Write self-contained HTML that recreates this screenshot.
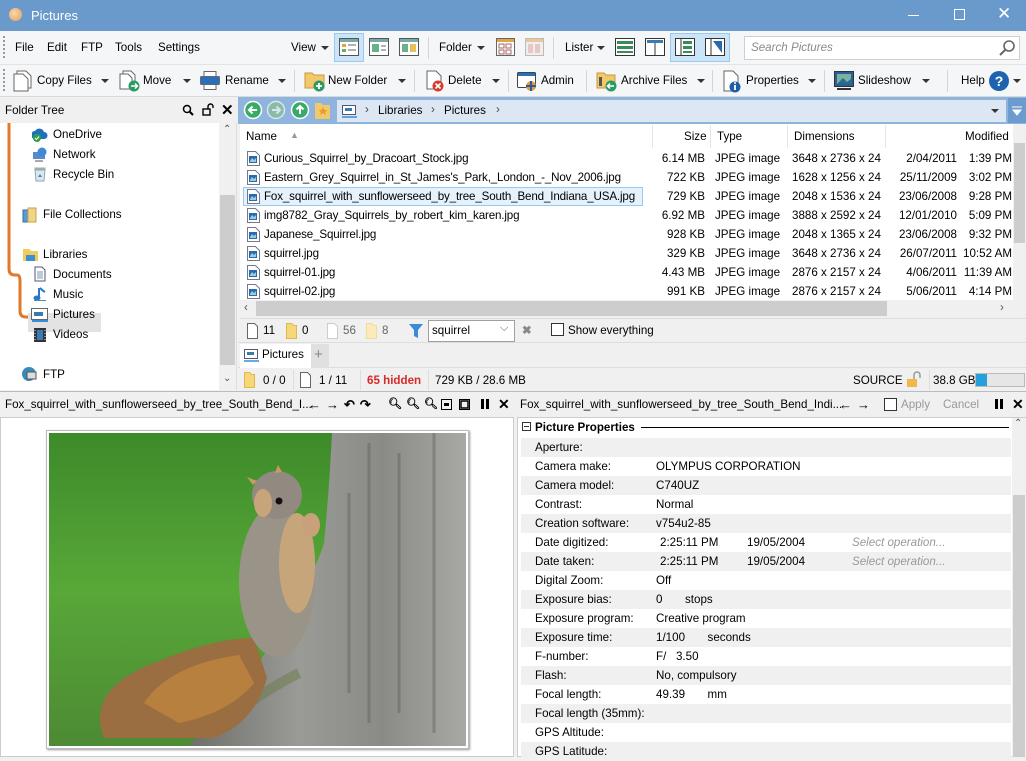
<!DOCTYPE html>
<html><head><meta charset="utf-8"><style>
*{box-sizing:border-box;margin:0;padding:0}
body{width:1026px;height:757px;overflow:hidden;background:#f0f0f0;font-family:"Liberation Sans",sans-serif;font-size:11.6px;color:#000;position:relative}
.a{position:absolute;white-space:nowrap}
.ic{position:absolute;display:block}
.dd{position:absolute;width:0;height:0;border-left:4px solid transparent;border-right:4px solid transparent;border-top:4px solid #333}
.sep{position:absolute;width:1px;background:#d5d5d5}
.prow{position:absolute;left:521px;width:490px;height:19px}
</style></head><body>
<div class="a" style="left:0;top:0;width:1026px;height:31px;background:#699acb"></div>
<div class="a" style="left:9px;top:8px;width:13px;height:13px;border-radius:50%;background:radial-gradient(circle at 40% 40%,#f7d9a8,#e49a5e)"></div>
<div class="a" style="left:31px;top:8px;color:#fff;font-size:13px">Pictures</div>
<div class="a" style="left:908px;top:15px;width:11px;height:1px;background:#fff"></div>
<div class="a" style="left:954px;top:9px;width:11px;height:11px;border:1px solid #fff"></div>
<div class="a" style="left:997px;top:4px;color:#fff;font-size:17px">✕</div>
<div class="a" style="left:0;top:31px;width:1026px;height:66px;background:#f5f6f7;border-bottom:1px solid #d9d9d9"></div>
<div class="a" style="left:0;top:64px;width:1026px;height:1px;background:#e3e3e3"></div>
<div class="a" style="left:3px;top:36px;width:2px;height:22px;border-left:2px dotted #999"></div>
<div class="a" style="left:3px;top:69px;width:2px;height:22px;border-left:2px dotted #999"></div>
<div class="a" style="left:15px;top:41px">File</div>
<div class="a" style="left:47px;top:41px">Edit</div>
<div class="a" style="left:81px;top:41px">FTP</div>
<div class="a" style="left:115px;top:41px">Tools</div>
<div class="a" style="left:158px;top:41px">Settings</div>
<div class="a" style="left:291px;top:41px">View</div><div class="dd" style="left:321px;top:46px"></div>
<div class="a" style="left:334px;top:33px;width:30px;height:29px;background:#cce4f7;border:1px solid #99c9ef"></div>
<svg class="ic" style="left:339px;top:38px" width="20" height="18"><rect x=".5" y=".5" width="19" height="17" fill="#fff" stroke="#555"/><rect x="1" y="1" width="18" height="3" fill="#7aa"/><rect x="3" y="6" width="4" height="3" fill="#d9a83a"/><rect x="3" y="11" width="4" height="3" fill="#6aaa6a"/><path d="M9 7h8M9 12h8" stroke="#666"/></svg>
<svg class="ic" style="left:369px;top:38px" width="20" height="18"><rect x=".5" y=".5" width="19" height="17" fill="#fff" stroke="#555"/><rect x="1" y="1" width="18" height="3" fill="#7aa"/><rect x="3" y="6" width="7" height="8" fill="#6ab08a"/><path d="M12 8h5M12 12h5" stroke="#666"/></svg>
<svg class="ic" style="left:399px;top:38px" width="20" height="18"><rect x=".5" y=".5" width="19" height="17" fill="#fff" stroke="#555"/><rect x="1" y="1" width="18" height="3" fill="#7aa"/><rect x="3" y="6" width="6" height="8" fill="#6ab08a"/><rect x="11" y="6" width="6" height="8" fill="#e2c35a"/></svg>
<div class="sep" style="left:428px;top:37px;height:22px"></div>
<div class="a" style="left:439px;top:41px">Folder</div><div class="dd" style="left:477px;top:46px"></div>
<svg class="ic" style="left:496px;top:38px" width="19" height="18"><rect x=".5" y=".5" width="18" height="17" fill="#fff" stroke="#666"/><rect x="1" y="1" width="17" height="3" fill="#e2a34a"/><rect x="3" y="6" width="5" height="4" fill="none" stroke="#a66"/><rect x="10" y="6" width="5" height="4" fill="none" stroke="#a66"/><rect x="3" y="12" width="5" height="4" fill="none" stroke="#a66"/><rect x="10" y="12" width="5" height="4" fill="none" stroke="#a66"/></svg>
<svg class="ic" style="left:525px;top:38px" width="19" height="18"><rect x=".5" y=".5" width="18" height="17" fill="#eee" stroke="#bbb"/><rect x="1" y="1" width="17" height="3" fill="#ebc89a"/><rect x="3" y="6" width="5" height="9" fill="#e9c6c6"/><rect x="10" y="6" width="5" height="9" fill="#e9c6c6"/></svg>
<div class="sep" style="left:553px;top:37px;height:22px"></div>
<div class="a" style="left:565px;top:41px">Lister</div><div class="dd" style="left:597px;top:46px"></div>
<svg class="ic" style="left:615px;top:38px" width="20" height="18"><rect x=".5" y=".5" width="19" height="17" fill="#fff" stroke="#333"/><rect x="2" y="3" width="16" height="3" fill="#3b8a5a"/><rect x="2" y="8" width="16" height="3" fill="#3b8a5a"/><rect x="2" y="13" width="16" height="2" fill="#3b8a5a"/></svg>
<svg class="ic" style="left:645px;top:38px" width="20" height="18"><rect x=".5" y=".5" width="19" height="17" fill="#fff" stroke="#333"/><rect x="2" y="2" width="16" height="3" fill="#3a7ab0"/><path d="M10 5v12" stroke="#333"/></svg>
<div class="a" style="left:670px;top:33px;width:60px;height:29px;background:#cce4f7;border:1px solid #99c9ef"></div>
<svg class="ic" style="left:675px;top:38px" width="20" height="18"><rect x=".5" y=".5" width="19" height="17" fill="#fff" stroke="#333"/><path d="M6 1v16" stroke="#333"/><rect x="8" y="3" width="9" height="3" fill="#3b8a5a"/><rect x="8" y="8" width="9" height="3" fill="#3b8a5a"/><rect x="8" y="13" width="9" height="2" fill="#3b8a5a"/></svg>
<svg class="ic" style="left:705px;top:38px" width="20" height="18"><rect x=".5" y=".5" width="19" height="17" fill="#fff" stroke="#333"/><path d="M6 1v16" stroke="#333"/><path d="M8 3h9v12z" fill="#2a6aa8"/></svg>
<div class="a" style="left:744px;top:36px;width:276px;height:24px;background:#fff;border:1px solid #d0d0d0"></div>
<div class="a" style="left:751px;top:41px;color:#8a8a8a;font-style:italic">Search Pictures</div>
<svg class="ic" style="left:999px;top:39px" width="17" height="17"><circle cx="10" cy="7" r="5" fill="none" stroke="#666" stroke-width="1.6"/><path d="M6 11l-5 5" stroke="#666" stroke-width="2"/></svg>
<svg class="ic" style="left:13px;top:70px" width="20" height="22"><path d="M4 1h9l5 5v12H4z" fill="#fff" stroke="#666"/><path d="M1 4h9l5 5v12H1z" fill="#fff" stroke="#666"/></svg>
<div class="a" style="left:37px;top:74px">Copy Files</div><div class="dd" style="left:101px;top:79px"></div>
<svg class="ic" style="left:119px;top:70px" width="22" height="22"><path d="M4 1h8l4 4v11H4z" fill="#fff" stroke="#666"/><path d="M1 4h8l4 4v11H1z" fill="#fff" stroke="#666"/><circle cx="15" cy="16" r="5.5" fill="#2d9a63"/><path d="M12 16h6M16 13.5l2.5 2.5-2.5 2.5" stroke="#fff" fill="none" stroke-width="1.5"/></svg>
<div class="a" style="left:143px;top:74px">Move</div><div class="dd" style="left:183px;top:79px"></div>
<svg class="ic" style="left:200px;top:71px" width="20" height="19"><rect x="4" y=".5" width="12" height="5" fill="#fff" stroke="#666"/><rect x=".5" y="5.5" width="19" height="8" rx="1" fill="#2a70b8" stroke="#667"/><rect x="4" y="13.5" width="12" height="5" fill="#fff" stroke="#666"/></svg>
<div class="a" style="left:225px;top:74px">Rename</div><div class="dd" style="left:278px;top:79px"></div>
<div class="sep" style="left:294px;top:70px;height:22px"></div>
<svg class="ic" style="left:304px;top:70px" width="22" height="22"><path d="M1 3h7l2 2h10v13H1z" fill="#f1c86a" stroke="#c89a3a"/><circle cx="15" cy="16" r="5.5" fill="#2d9a63"/><path d="M12 16h6M15 13v6" stroke="#fff" stroke-width="1.8"/></svg>
<div class="a" style="left:328px;top:74px">New Folder</div><div class="dd" style="left:398px;top:79px"></div>
<div class="sep" style="left:414px;top:70px;height:22px"></div>
<svg class="ic" style="left:426px;top:70px" width="22" height="22"><path d="M1 1h9l5 5v13H1z" fill="#fff" stroke="#666"/><circle cx="12" cy="16" r="5.5" fill="#d73b2e"/><path d="M9.5 13.5l5 5M14.5 13.5l-5 5" stroke="#fff" stroke-width="1.6"/></svg>
<div class="a" style="left:448px;top:74px">Delete</div><div class="dd" style="left:492px;top:79px"></div>
<div class="sep" style="left:508px;top:70px;height:22px"></div>
<svg class="ic" style="left:517px;top:70px" width="22" height="22"><rect x=".5" y="2.5" width="18" height="15" rx="1" fill="#fff" stroke="#444"/><rect x="1" y="3" width="17" height="3" fill="#2a70b8"/><circle cx="14" cy="16" r="5" fill="#e29a3a"/><path d="M14 11v10M9 16h10" stroke="#2a5a9a" stroke-width="2"/></svg>
<div class="a" style="left:541px;top:74px">Admin</div>
<div class="sep" style="left:586px;top:70px;height:22px"></div>
<svg class="ic" style="left:596px;top:70px" width="22" height="22"><path d="M1 3h7l2 2h9v13H1z" fill="#f1c86a" stroke="#c89a3a"/><rect x="3" y="7" width="3" height="9" fill="#555"/><circle cx="15" cy="16" r="5.5" fill="#2d9a63"/><path d="M18 16h-6M14 13.5L11.5 16l2.5 2.5" stroke="#fff" fill="none" stroke-width="1.5"/></svg>
<div class="a" style="left:621px;top:74px">Archive Files</div><div class="dd" style="left:697px;top:79px"></div>
<div class="sep" style="left:712px;top:70px;height:22px"></div>
<svg class="ic" style="left:723px;top:70px" width="22" height="23"><path d="M1 1h9l5 5v15H1z" fill="#fff" stroke="#666"/><circle cx="12" cy="17" r="5.5" fill="#1f5fa8"/><path d="M12 15v5" stroke="#fff" stroke-width="1.8"/><circle cx="12" cy="13" r="1" fill="#fff"/></svg>
<div class="a" style="left:746px;top:74px">Properties</div><div class="dd" style="left:808px;top:79px"></div>
<div class="sep" style="left:824px;top:70px;height:22px"></div>
<svg class="ic" style="left:834px;top:71px" width="20" height="20"><rect x=".5" y=".5" width="19" height="15" fill="#2a5f9a" stroke="#333"/><rect x="3" y="3" width="14" height="10" fill="#7ab2a0"/><path d="M3 13l6-6 4 4 4-3v5z" fill="#2a6a8a"/><path d="M3 18h14" stroke="#333" stroke-width="2"/></svg>
<div class="a" style="left:858px;top:74px">Slideshow</div><div class="dd" style="left:922px;top:79px"></div>
<div class="sep" style="left:947px;top:70px;height:22px"></div>
<div class="a" style="left:961px;top:74px">Help</div>
<div class="a" style="left:989px;top:71px;width:20px;height:20px;border-radius:50%;background:#1f63b0;color:#fff;font-weight:bold;font-size:14px;text-align:center;line-height:20px">?</div>
<div class="dd" style="left:1013px;top:79px"></div>
<div class="a" style="left:0;top:98px;width:238px;height:25px;background:#f0f0f0"></div>
<div class="a" style="left:5px;top:104px">Folder Tree</div>
<svg class="ic" style="left:182px;top:104px" width="12" height="12"><circle cx="5" cy="5" r="3.5" fill="none" stroke="#000" stroke-width="1.5"/><path d="M7.5 7.5L11 11" stroke="#000" stroke-width="2"/></svg>
<svg class="ic" style="left:202px;top:103px" width="13" height="13"><rect x="1" y="6" width="7" height="6" fill="none" stroke="#000" stroke-width="1.4"/><path d="M6 6V3.5a2.5 2.5 0 015 0V5" fill="none" stroke="#000" stroke-width="1.4"/></svg>
<div class="a" style="left:221px;top:101px;font-size:15px;font-weight:bold">✕</div>
<div class="a" style="left:0;top:123px;width:237px;height:267px;background:#fff;border-right:1px solid #ddd"></div>
<div class="a" style="left:219px;top:123px;width:17px;height:267px;background:#f0f0f0"></div>
<div class="a" style="left:220px;top:195px;width:15px;height:170px;background:#cdcdcd"></div>
<div class="a" style="left:223px;top:124px;color:#555;font-size:10px">⌃</div>
<div class="a" style="left:223px;top:373px;color:#555;font-size:10px">⌄</div>
<svg class="ic" style="left:0;top:123px" width="40" height="200"><path d="M9 0v146q0 6 6 6h2q3 0 3 6v30q0 6 6 6h10" fill="none" stroke="#e07a2a" stroke-width="3"/></svg>
<div class="a" style="left:28px;top:313px;width:73px;height:19px;background:#e3e3e3"></div>
<svg class="ic" style="left:32px;top:128px" width="16" height="14"><path d="M3 11a4 4 0 010-8 5 5 0 019 1 3.5 3.5 0 010 7z" fill="#1f6fbf"/><circle cx="5" cy="10" r="4" fill="#30a040"/><path d="M3 10l1.5 1.5L7 8.5" stroke="#fff" fill="none"/></svg>
<div class="a" style="left:53px;top:128px">OneDrive</div>
<svg class="ic" style="left:32px;top:147px" width="16" height="15"><rect x="1" y="5" width="12" height="7" fill="#5a8ac8"/><circle cx="10" cy="5" r="4.5" fill="#3c8ad8"/><path d="M3 14h8" stroke="#555"/></svg>
<div class="a" style="left:53px;top:148px">Network</div>
<svg class="ic" style="left:34px;top:167px" width="12" height="15"><rect x="0.5" y="0.5" width="11" height="2" fill="#aaa"/><path d="M1 3h10l-1 11H2z" fill="#dde6ee" stroke="#8aa"/><path d="M4 10l2-3 2 3z" fill="#3a8ac8"/></svg>
<div class="a" style="left:53px;top:168px">Recycle Bin</div>
<svg class="ic" style="left:22px;top:207px" width="16" height="16"><rect x="1" y="3" width="7" height="12" fill="#5a9ad8" stroke="#3a6a9a"/><rect x="6" y="1" width="8" height="14" fill="#f1d487" stroke="#c8a24a"/></svg>
<div class="a" style="left:43px;top:208px">File Collections</div>
<svg class="ic" style="left:22px;top:247px" width="17" height="15"><path d="M1 2h6l2 2h7v10H1z" fill="#f3cb5a"/><rect x="4" y="8" width="9" height="6" fill="#3a90d8"/></svg>
<div class="a" style="left:43px;top:248px">Libraries</div>
<svg class="ic" style="left:33px;top:266px" width="14" height="16"><path d="M2 1h7l3 3v11H2z" fill="#fff" stroke="#557"/><path d="M4 6h6M4 8h6M4 10h6M4 12h6" stroke="#79a"/></svg>
<div class="a" style="left:53px;top:268px">Documents</div>
<svg class="ic" style="left:33px;top:286px" width="14" height="16"><path d="M6 2v10" stroke="#2a78c8" stroke-width="2"/><ellipse cx="4" cy="12" rx="3.5" ry="2.5" fill="#2a78c8"/><path d="M7 2q3 3 5 4" stroke="#2a78c8" stroke-width="2" fill="none"/><rect x="1" y="14" width="12" height="1" fill="#58a"/></svg>
<div class="a" style="left:53px;top:288px">Music</div>
<svg class="ic" style="left:31px;top:308px" width="18" height="14"><rect x=".5" y=".5" width="16" height="11" fill="#fff" stroke="#666"/><rect x="3" y="4" width="9" height="4" fill="#3a7ab0"/><path d="M1 13h16" stroke="#3a8ad8" stroke-width="2"/></svg>
<div class="a" style="left:53px;top:308px">Pictures</div>
<svg class="ic" style="left:33px;top:327px" width="14" height="16"><rect x="1" y="1" width="12" height="14" fill="#333"/><rect x="4" y="3" width="6" height="10" fill="#3a7ab8"/><path d="M2 3v1M2 6v1M2 9v1M2 12v1M12 3v1M12 6v1M12 9v1M12 12v1" stroke="#eee"/></svg>
<div class="a" style="left:53px;top:328px">Videos</div>
<svg class="ic" style="left:21px;top:366px" width="16" height="16"><circle cx="8" cy="8" r="7" fill="#3a8ab8"/><rect x="6" y="6" width="9" height="7" fill="#ddd" stroke="#555"/></svg>
<div class="a" style="left:43px;top:368px">FTP</div>
<div class="a" style="left:238px;top:97px;width:788px;height:27px;background:#8fb4de"></div>
<svg class="ic" style="left:243px;top:100px" width="100" height="20"><circle cx="10" cy="10" r="8.5" fill="#3aaa6a" stroke="#fff" stroke-width="1.5"/><path d="M14 10H6M9.5 6.5L6 10l3.5 3.5" stroke="#fff" stroke-width="2" fill="none"/><circle cx="33" cy="10" r="8.5" fill="#8abba6" stroke="#d8e6ef" stroke-width="1.5"/><path d="M29 10h8M33.5 6.5L37 10l-3.5 3.5" stroke="#d8e6ef" stroke-width="2" fill="none"/><circle cx="57" cy="10" r="8.5" fill="#3aaa6a" stroke="#fff" stroke-width="1.5"/><path d="M57 14V6M53.5 9.5L57 6l3.5 3.5" stroke="#fff" stroke-width="2" fill="none"/><path d="M72 3h6l2 2h7v14H72z" fill="#f1c86a"/><path d="M80 7l1.5 3h3l-2.5 2 1 3-3-2-3 2 1-3-2.5-2h3z" fill="#e89a2a"/></svg>
<div class="a" style="left:337px;top:100px;width:669px;height:22px;background:#dce7f3"></div>
<svg class="ic" style="left:342px;top:105px" width="16" height="13"><rect x=".5" y=".5" width="13" height="9" fill="#fff" stroke="#557"/><rect x="3" y="3" width="7" height="3" fill="#3a7ab0"/><path d="M0 12h15" stroke="#3a8ad8" stroke-width="1.5"/></svg>
<div class="a" style="left:365px;top:103px;color:#444">›</div>
<div class="a" style="left:378px;top:104px">Libraries</div>
<div class="a" style="left:431px;top:103px;color:#444">›</div>
<div class="a" style="left:444px;top:104px">Pictures</div>
<div class="a" style="left:496px;top:103px;color:#444">›</div>
<div class="dd" style="left:991px;top:109px"></div>
<div class="a" style="left:1008px;top:98px;width:18px;height:25px;background:#6c9bd0"></div>
<svg class="ic" style="left:1011px;top:104px" width="12" height="12"><path d="M1 3h10M2 6h8l-4 5z" fill="#fff" stroke="#fff"/></svg>
<div class="a" style="left:240px;top:124px;width:786px;height:195px;background:#fff"></div>
<div class="a" style="left:246px;top:130px">Name</div>
<div class="a" style="left:290px;top:130px;color:#999;font-size:9px">▲</div>
<div class="a" style="left:652px;top:125px;width:1px;height:23px;background:#e5e5e5"></div>
<div class="a" style="left:684px;top:130px">Size</div>
<div class="a" style="left:710px;top:125px;width:1px;height:23px;background:#e5e5e5"></div>
<div class="a" style="left:717px;top:130px">Type</div>
<div class="a" style="left:787px;top:125px;width:1px;height:23px;background:#e5e5e5"></div>
<div class="a" style="left:794px;top:130px">Dimensions</div>
<div class="a" style="left:885px;top:125px;width:1px;height:23px;background:#e5e5e5"></div>
<div class="a" style="left:965px;top:130px">Modified</div>
<div class="a" style="left:1013px;top:124px;width:13px;height:176px;background:#f0f0f0"></div>
<div class="a" style="left:1014px;top:143px;width:11px;height:100px;background:#cdcdcd"></div>
<div class="a" style="left:240px;top:300px;width:786px;height:18px;background:#f0f0f0"></div>
<div class="a" style="left:256px;top:301px;width:631px;height:15px;background:#cdcdcd"></div>
<div class="a" style="left:244px;top:301px;color:#555">‹</div>
<div class="a" style="left:1000px;top:301px;color:#555">›</div>
<div class="a" style="left:240px;top:318px;width:786px;height:1px;background:#ddd"></div>
<div id="rows"></div>
<div class="a" style="left:238px;top:319px;width:788px;height:24px;background:#f0f0f0;border-bottom:1px solid #ddd"></div>
<svg class="ic" style="left:246px;top:323px" width="180" height="16"><path d="M1.5 .5h7l3 3v12h-10z" fill="#fff" stroke="#666"/><path d="M40.5 .5h5l2 2h3v13h-10z" fill="#f6d77a" stroke="#e0b84a"/><path d="M81.5 .5h7l3 3v12h-10z" fill="#fff" stroke="#ccc"/><path d="M120.5 .5h5l2 2h3v13h-10z" fill="#fbeaba" stroke="#f3dc9a"/><path d="M163 1h14l-5 6v8l-4-2V7z" fill="#3a8ad8"/></svg>
<div class="a" style="left:263px;top:324px">11</div>
<div class="a" style="left:302px;top:324px">0</div>
<div class="a" style="left:343px;top:324px;color:#666">56</div>
<div class="a" style="left:382px;top:324px;color:#666">8</div>
<div class="a" style="left:428px;top:320px;width:87px;height:22px;background:#fff;border:1px solid #a0a0a0"></div>
<div class="a" style="left:432px;top:324px">squirrel</div>
<div class="a" style="left:500px;top:322px;color:#555;font-size:11px">⌵</div>
<div class="a" style="left:522px;top:323px;color:#888;font-weight:bold">✖</div>
<div class="a" style="left:551px;top:323px;width:13px;height:13px;background:#fff;border:1px solid #333"></div>
<div class="a" style="left:568px;top:324px">Show everything</div>
<div class="a" style="left:238px;top:344px;width:788px;height:24px;background:#f0f0f0;border-bottom:1px solid #ddd"></div>
<div class="a" style="left:240px;top:344px;width:71px;height:24px;background:#fff"></div>
<svg class="ic" style="left:244px;top:349px" width="16" height="13"><rect x=".5" y=".5" width="13" height="9" fill="#fff" stroke="#557"/><rect x="3" y="3" width="7" height="3" fill="#3a7ab0"/><path d="M0 12h15" stroke="#3a8ad8" stroke-width="1.5"/></svg>
<div class="a" style="left:262px;top:348px">Pictures</div>
<div class="a" style="left:311px;top:344px;width:18px;height:24px;background:#e0e0e0"></div>
<div class="a" style="left:314px;top:346px;color:#888;font-size:15px">+</div>
<div class="a" style="left:238px;top:369px;width:788px;height:22px;background:#f0f0f0"></div>
<svg class="ic" style="left:244px;top:372px" width="70" height="16"><path d="M.5 .5h5l2 2h3v13h-10z" fill="#f6d77a" stroke="#e0b84a"/><path d="M56.5 .5h7l3 3v12h-10z" fill="#fff" stroke="#666"/></svg>
<div class="a" style="left:263px;top:374px">0 / 0</div>
<div class="a" style="left:293px;top:370px;width:1px;height:20px;background:#ddd"></div>
<div class="a" style="left:319px;top:374px">1 / 11</div>
<div class="a" style="left:360px;top:370px;width:1px;height:20px;background:#ddd"></div>
<div class="a" style="left:367px;top:374px;color:#d82a2a;font-weight:bold">65 hidden</div>
<div class="a" style="left:428px;top:370px;width:1px;height:20px;background:#ddd"></div>
<div class="a" style="left:435px;top:374px">729 KB / 28.6 MB</div>
<div class="a" style="left:853px;top:374px">SOURCE</div>
<svg class="ic" style="left:906px;top:371px" width="18" height="17"><rect x="1" y="8" width="10" height="8" fill="#f0b84a"/><path d="M8 8V4a3 3 0 016 0v3" fill="none" stroke="#999" stroke-width="1.5"/></svg>
<div class="a" style="left:929px;top:370px;width:1px;height:20px;background:#ddd"></div>
<div class="a" style="left:933px;top:374px">38.8 GB</div>
<div class="a" style="left:975px;top:373px;width:50px;height:14px;background:#e6e6e6;border:1px solid #bbb"></div>
<div class="a" style="left:976px;top:374px;width:11px;height:12px;background:#26a0da"></div>
<div class="a" style="left:0;top:391px;width:1026px;height:1px;background:#bbb"></div>
<div class="a" style="left:0;top:392px;width:1026px;height:25px;background:#f0f0f0"></div>
<div class="a" style="left:5px;top:398px">Fox_squirrel_with_sunflowerseed_by_tree_South_Bend_I...</div>
<div class="a" style="left:308px;top:397px;font-size:13px;font-weight:bold;letter-spacing:5px">&#x2190;&#x2192;&#x21B6;&#x21B7;</div>
<div class="a" style="left:388px;top:397px;font-size:11px;font-weight:bold;letter-spacing:4px">🔍︎🔍︎🔍︎</div>
<svg class="ic" style="left:441px;top:399px" width="30" height="12"><rect x=".5" y=".5" width="10" height="10" fill="none" stroke="#000"/><rect x="3" y="4" width="5" height="3" fill="#000"/><rect x="18.5" y=".5" width="10" height="10" fill="none" stroke="#000"/><rect x="20" y="2" width="7" height="7" fill="none" stroke="#000" stroke-width="1.5"/></svg>
<div class="a" style="left:481px;top:399px;width:3px;height:10px;background:#000"></div>
<div class="a" style="left:486px;top:399px;width:3px;height:10px;background:#000"></div>
<div class="a" style="left:498px;top:396px;font-size:14px;font-weight:bold">✕</div>
<div class="a" style="left:520px;top:398px">Fox_squirrel_with_sunflowerseed_by_tree_South_Bend_Indi...</div>
<div class="a" style="left:839px;top:397px;font-size:13px;font-weight:bold;letter-spacing:5px">&#x2190;&#x2192;</div>
<div class="a" style="left:884px;top:398px;width:13px;height:13px;background:#fff;border:1px solid #333"></div>
<div class="a" style="left:901px;top:398px;color:#999">Apply</div>
<div class="a" style="left:943px;top:398px;color:#999">Cancel</div>
<div class="a" style="left:995px;top:399px;width:3px;height:10px;background:#000"></div>
<div class="a" style="left:1000px;top:399px;width:3px;height:10px;background:#000"></div>
<div class="a" style="left:1012px;top:396px;font-size:14px;font-weight:bold">✕</div>
<div class="a" style="left:0;top:417px;width:514px;height:340px;background:#fff;border:1px solid #ccc"></div>
<div class="a" style="left:46px;top:430px;width:423px;height:319px;background:#fff;border:1px solid #bbb;box-shadow:1px 1px 2px #999"></div>
<svg class="ic" style="left:49px;top:433px" width="417" height="313">
<defs><linearGradient id="g" x1="0" y1="0" x2="0" y2="1"><stop offset="0" stop-color="#3d8a2a"/><stop offset=".5" stop-color="#58a838"/><stop offset="1" stop-color="#4d8a34"/></linearGradient>
<linearGradient id="t" x1="0" y1="0" x2="1" y2="0"><stop offset="0" stop-color="#6f6f6a"/><stop offset=".4" stop-color="#9a9a96"/><stop offset=".7" stop-color="#8a8a86"/><stop offset="1" stop-color="#a8a8a4"/></linearGradient></defs>
<rect width="417" height="313" fill="url(#g)"/>
<path d="M283 0H417V313H140Q200 250 235 190T275 110Q280 60 283 0z" fill="url(#t)"/>
<path d="M320 10v280M350 20v260M385 0v300M300 60v200" stroke="#5a5a56" stroke-width="3" opacity=".4"/>
<path d="M160 300q50-40 90-60" stroke="#6a7a4a" stroke-width="10" opacity=".5" fill="none"/>
<path d="M55 305Q35 255 110 228Q165 205 205 205L218 245Q205 290 165 305Z" fill="#9a6e40"/>
<path d="M95 270Q120 232 190 222L205 250Q180 280 130 290Z" fill="#b8803e"/>
<ellipse cx="228" cy="148" rx="38" ry="76" fill="#9a9488"/>
<ellipse cx="248" cy="130" rx="18" ry="50" fill="#c6a57a"/>
<ellipse cx="228" cy="62" rx="25" ry="24" fill="#928a80"/>
<ellipse cx="214" cy="70" rx="9" ry="14" fill="#c8a47a"/>
<circle cx="230" cy="68" r="3.5" fill="#111"/>
<path d="M204 52l-6-8 10 4zM226 40l3-8 4 7z" fill="#c89a6a"/>
<ellipse cx="262" cy="92" rx="9" ry="12" fill="#c8a07a"/>
</svg>
<div class="a" style="left:517px;top:417px;width:509px;height:340px;background:#fff;border:1px solid #ccc"></div>
<div class="a" style="left:1012px;top:418px;width:14px;height:339px;background:#f0f0f0"></div>
<div class="a" style="left:1013px;top:495px;width:12px;height:262px;background:#cdcdcd"></div>
<div class="a" style="left:1014px;top:418px;color:#555;font-size:10px">⌃</div>
<div class="a" style="left:522px;top:422px;width:9px;height:9px;border:1px solid #333;background:#fff"></div>
<div class="a" style="left:524px;top:426px;width:5px;height:1px;background:#333"></div>
<div class="a" style="left:535px;top:421px;font-weight:bold">Picture Properties</div>
<div class="a" style="left:641px;top:427px;width:368px;height:1px;background:#000"></div>
<div id="props"></div>
<script>
var files=[["Curious_Squirrel_by_Dracoart_Stock.jpg","6.14 MB","3648 x 2736 x 24","2/04/2011","1:39 PM"],
["Eastern_Grey_Squirrel_in_St_James's_Park,_London_-_Nov_2006.jpg","722 KB","1628 x 1256 x 24","25/11/2009","3:02 PM"],
["Fox_squirrel_with_sunflowerseed_by_tree_South_Bend_Indiana_USA.jpg","729 KB","2048 x 1536 x 24","23/06/2008","9:28 PM"],
["img8782_Gray_Squirrels_by_robert_kim_karen.jpg","6.92 MB","3888 x 2592 x 24","12/01/2010","5:09 PM"],
["Japanese_Squirrel.jpg","928 KB","2048 x 1365 x 24","23/06/2008","9:32 PM"],
["squirrel.jpg","329 KB","3648 x 2736 x 24","26/07/2011","10:52 AM"],
["squirrel-01.jpg","4.43 MB","2876 x 2157 x 24","4/06/2011","11:39 AM"],
["squirrel-02.jpg","991 KB","2876 x 2157 x 24","5/06/2011","4:14 PM"]];
var h="";
files.forEach(function(f,i){var y=149+i*19;
if(i==2)h+='<div class="a" style="left:243px;top:'+y+'px;width:400px;height:19px;background:#e5f1fb;border:1px solid #99c9ef"></div>';
h+='<svg class="ic" style="left:247px;top:'+(y+2)+'px" width="13" height="15"><path d="M.5 .5h8l4 4v10H.5z" fill="#fff" stroke="#778"/><rect x="2" y="5" width="8" height="7" fill="#2a6ab0"/><path d="M3 10l2-3 2 2 2-2v4H3z" fill="#9cd"/></svg>';
h+='<div class="a" style="left:264px;top:'+(y+3)+'px;letter-spacing:-0.15px">'+f[0]+'</div>';
h+='<div class="a" style="left:600px;width:105px;text-align:right;top:'+(y+3)+'px">'+f[1]+'</div>';
h+='<div class="a" style="left:715px;top:'+(y+3)+'px">JPEG image</div>';
h+='<div class="a" style="left:792px;top:'+(y+3)+'px">'+f[2]+'</div>';
h+='<div class="a" style="left:860px;width:97px;text-align:right;top:'+(y+3)+'px">'+f[3]+'</div>';
h+='<div class="a" style="left:940px;width:72px;text-align:right;top:'+(y+3)+'px">'+f[4]+'</div>';});
document.getElementById("rows").innerHTML=h;
var p=[["Aperture:",""],["Camera make:","OLYMPUS CORPORATION"],["Camera model:","C740UZ"],["Contrast:","Normal"],["Creation software:","v754u2-85"],["Date digitized:","D"],["Date taken:","D"],["Digital Zoom:","Off"],["Exposure bias:","0&nbsp;&nbsp;&nbsp;&nbsp;&nbsp;&nbsp;&nbsp;stops"],["Exposure program:","Creative program"],["Exposure time:","1/100&nbsp;&nbsp;&nbsp;&nbsp;&nbsp;&nbsp;&nbsp;seconds"],["F-number:","F/&nbsp;&nbsp;&nbsp;3.50"],["Flash:","No, compulsory"],["Focal length:","49.39&nbsp;&nbsp;&nbsp;&nbsp;&nbsp;&nbsp;&nbsp;mm"],["Focal length (35mm):",""],["GPS Altitude:",""],["GPS Latitude:",""]];
h="";
p.forEach(function(r,i){var y=438+i*19;
h+='<div class="prow" style="top:'+y+'px;background:'+(i%2?'#fff':'#f0f0f0')+'"></div>';
h+='<div class="a" style="left:535px;top:'+(y+3)+'px">'+r[0]+'</div>';
if(r[1]=="D"){h+='<div class="a" style="left:660px;top:'+(y+3)+'px">2:25:11 PM</div><div class="a" style="left:747px;top:'+(y+3)+'px">19/05/2004</div><div class="a" style="left:852px;top:'+(y+3)+'px;color:#999;font-style:italic">Select operation...</div>';}
else h+='<div class="a" style="left:656px;top:'+(y+3)+'px">'+r[1]+'</div>';});
document.getElementById("props").innerHTML=h;
</script>
</body></html>
